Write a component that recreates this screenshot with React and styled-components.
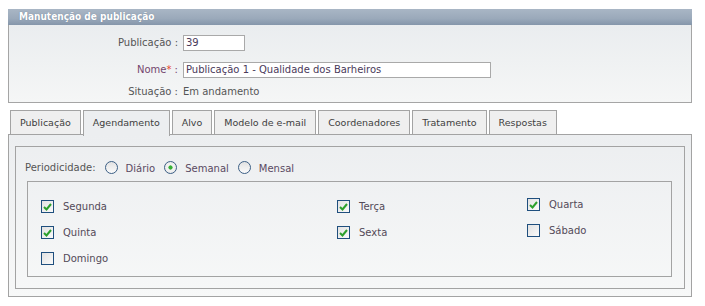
import React from "react";
import styled, { createGlobalStyle } from "styled-components";

const GlobalStyle = createGlobalStyle`
  body {
    margin: 0;
    padding: 9px 14px 0 8px;
    background: #ffffff;
    font-family: "DejaVu Sans", Verdana, sans-serif;
    font-size: 10px;
    color: #4f4f4f;
  }
`;

const days = [
  { shift: 0, items: [["Segunda", true], ["Quinta", true], ["Domingo", false]] },
  { shift: 0, items: [["Terça", true], ["Sexta", true]] },
  { shift: -2, items: [["Quarta", true], ["Sábado", false]] },
];

const tabs = [
  "Publicação",
  "Agendamento",
  "Alvo",
  "Modelo de e-mail",
  "Coordenadores",
  "Tratamento",
  "Respostas",
];

const CheckBox = ({ checked }) => (
  <Box>
    {checked && (
      <svg width="9" height="8" viewBox="0 0 9 8">
        <path d="M1 4 L3.5 6.5 L8 1" fill="none" stroke="#2ca02c" strokeWidth="2" />
      </svg>
    )}
  </Box>
);

const Radio = ({ checked }) => <RadioDot $checked={checked} />;

export default function App() {
  return (
    <>
      <GlobalStyle />
      <Header>Manutenção de publicação</Header>
      <FormBox>
        <Label>Publicação :</Label>
        <Field>
          <Input defaultValue="39" $w={62} />
        </Field>
        <Label $name>
          Nome<Star>*</Star> :
        </Label>
        <Field>
          <Input defaultValue="Publicação 1 - Qualidade dos Barheiros" $w={308} />
        </Field>
        <Label>Situação :</Label>
        <Field>Em andamento</Field>
      </FormBox>

      <TabBar>
        {tabs.map((t) => (
          <Tab key={t} $active={t === "Agendamento"}>
            {t}
          </Tab>
        ))}
      </TabBar>
      <TabPanel>
        <Frame>
          <PeriodRow>
            <span>Periodicidade:</span>
            <Option>
              <Radio />
              <OptionText>Diário</OptionText>
            </Option>
            <Option>
              <Radio checked />
              <OptionText>Semanal</OptionText>
            </Option>
            <Option>
              <Radio />
              <OptionText>Mensal</OptionText>
            </Option>
          </PeriodRow>
          <DaysBox>
            {days.map((col, i) => (
              <DayColumn key={i} $shift={col.shift}>
                {col.items.map(([name, on]) => (
                  <Day key={name}>
                    <CheckBox checked={on} />
                    <span>{name}</span>
                  </Day>
                ))}
              </DayColumn>
            ))}
          </DaysBox>
        </Frame>
      </TabPanel>
    </>
  );
}

const Header = styled.div`
  width: 684px;
  height: 16px;
  line-height: 16px;
  padding-left: 11px;
  box-sizing: border-box;
  background: linear-gradient(#a9b6c5, #9aa9ba 60%, #8596aa);
  color: #ffffff;
  font-family: "DejaVu Sans Condensed", "DejaVu Sans", sans-serif;
  font-weight: bold;
  font-size: 10px;
  text-shadow: 0 0 1px #6a7c90;
`;

const FormBox = styled.div`
  width: 684px;
  box-sizing: border-box;
  border: 1px solid #a5a5a5;
  border-top: none;
  background: linear-gradient(#eaedef, #f5f6f6);
  display: grid;
  grid-template-columns: 169px 1fr;
  grid-template-rows: 27px 27px 16px;
  column-gap: 5px;
  padding: 4px 0 3px 0;
  align-items: center;
`;

const Label = styled.div`
  text-align: right;
  color: ${(p) => (p.$name ? "#74466e" : "#555555")};
`;

const Star = styled.span`
  color: #e8412c;
`;

const Field = styled.div`
  display: flex;
  align-items: center;
  color: #555555;
`;

const Input = styled.input`
  width: ${(p) => p.$w}px;
  height: 16px;
  box-sizing: border-box;
  border: 1px solid #a9a9a9;
  padding: 0 2px;
  font-family: "DejaVu Sans", Verdana, sans-serif;
  font-size: 10px;
  color: #4a3a5a;
  background: #ffffff;
`;

const TabBar = styled.div`
  display: flex;
  gap: 2px;
  margin-top: 7px;
  padding-left: 2px;
  height: 25px;
  position: relative;
  z-index: 1;
`;

const Tab = styled.div`
  box-sizing: border-box;
  padding: 0 9px;
  line-height: 24px;
  font-size: 9.5px;
  border: 1px solid #a3a3a3;
  border-bottom: ${(p) => (p.$active ? "none" : "1px solid #a3a3a3")};
  background: ${(p) => (p.$active ? "#eceef0" : "#efefef")};
  color: #404040;
  height: ${(p) => (p.$active ? "26px" : "25px")};
`;

const TabPanel = styled.div`
  width: 684px;
  box-sizing: border-box;
  margin-top: -1px;
  border: 1px solid #a3a3a3;
  background: linear-gradient(#eceef0, #f7f8f8);
  padding: 11px 6px 7px 6px;
`;

const Frame = styled.div`
  border: 1px solid #a3a3a3;
  padding: 0 12px 11px 9px;
`;

const PeriodRow = styled.div`
  display: flex;
  align-items: center;
  height: 34px;
  box-sizing: border-box;
  padding-top: 6px;
  color: #555555;
`;

const Option = styled.label`
  display: flex;
  align-items: center;
  margin-left: 9px;
`;

const OptionText = styled.span`
  margin-left: 8px;
  margin-top: 3px;
  color: #5a4a62;
`;

const RadioDot = styled.span`
  width: 13px;
  height: 13px;
  box-sizing: border-box;
  border-radius: 50%;
  border: 1px solid #3c5f85;
  background: ${(p) =>
    p.$checked
      ? "radial-gradient(circle, #35b035 0, #35b035 1.8px, #f4f4f4 2.4px, #e4e4e4 100%)"
      : "linear-gradient(#e2e2e2, #fbfbfb)"};
`;

const DaysBox = styled.div`
  border: 1px solid #a3a3a3;
  margin-left: 2px;
  height: 96px;
  box-sizing: border-box;
  display: grid;
  grid-template-columns: 296px 190px 1fr;
  padding: 18px 0 0 13px;
`;

const DayColumn = styled.div`
  display: flex;
  flex-direction: column;
  gap: 13px;
  margin-top: ${(p) => p.$shift}px;
`;

const Day = styled.div`
  display: flex;
  align-items: center;
  gap: 9px;
  height: 13px;
  color: #534a58;
`;

const Box = styled.span`
  width: 13px;
  height: 13px;
  box-sizing: border-box;
  border: 1px solid #1f4f7e;
  background: linear-gradient(135deg, #e2e2e2, #fafafa);
  display: flex;
  align-items: center;
  justify-content: center;
`;
